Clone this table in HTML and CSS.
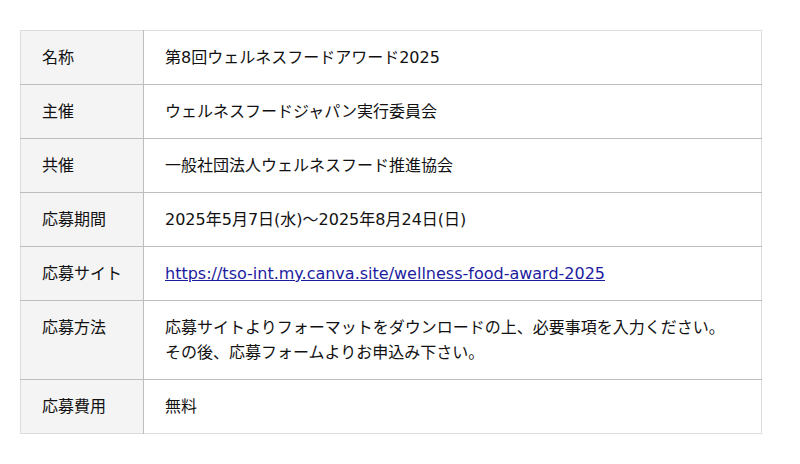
FILE: index.html
```html
<!DOCTYPE html>
<html lang="ja">
<head>
<meta charset="utf-8">
<link rel="stylesheet" href="styles.css">
</head>
<body>
<div class="page">
<table class="info">
<tr><th>名称</th><td>第8回ウェルネスフードアワード2025</td></tr>
<tr><th>主催</th><td>ウェルネスフードジャパン実行委員会</td></tr>
<tr><th>共催</th><td>一般社団法人ウェルネスフード推進協会</td></tr>
<tr><th>応募期間</th><td>2025年5月7日(水)～2025年8月24日(日)</td></tr>
<tr><th>応募サイト</th><td><a class="link" href="#">https://tso-int.my.canva.site/wellness-food-award-2025</a></td></tr>
<tr><th>応募方法</th><td>応募サイトよりフォーマットをダウンロードの上、必要事項を入力ください。<br>その後、応募フォームよりお申込み下さい。</td></tr>
<tr><th>応募費用</th><td>無料</td></tr>
</table>
</div>
</body>
</html>
```
FILE: styles.css
```css
html, body {
  margin: 0;
  padding: 0;
  background: #fff;
}
.page {
  padding: 30px 38px 0 20px;
}
.info {
  width: 742px;
  border-collapse: collapse;
  font-family: "DejaVu Sans", "Noto Sans CJK JP", sans-serif;
  font-size: 16px;
  line-height: 25px;
  color: #111;
  border: 1px solid #dcdcdc;
}
.info tr + tr th,
.info tr + tr td {
  border-top: 1px solid #bdbdbd;
}
.info th {
  width: 80px;
  background: #f4f4f4;
  text-align: left;
  font-weight: normal;
  padding: 14px 21px;
  border-right: 1px solid #bdbdbd;
  vertical-align: top;
}
.info td {
  padding: 14px 21px;
  vertical-align: top;
}
.link {
  color: #1c1ca0;
  text-decoration: underline;
}
```
